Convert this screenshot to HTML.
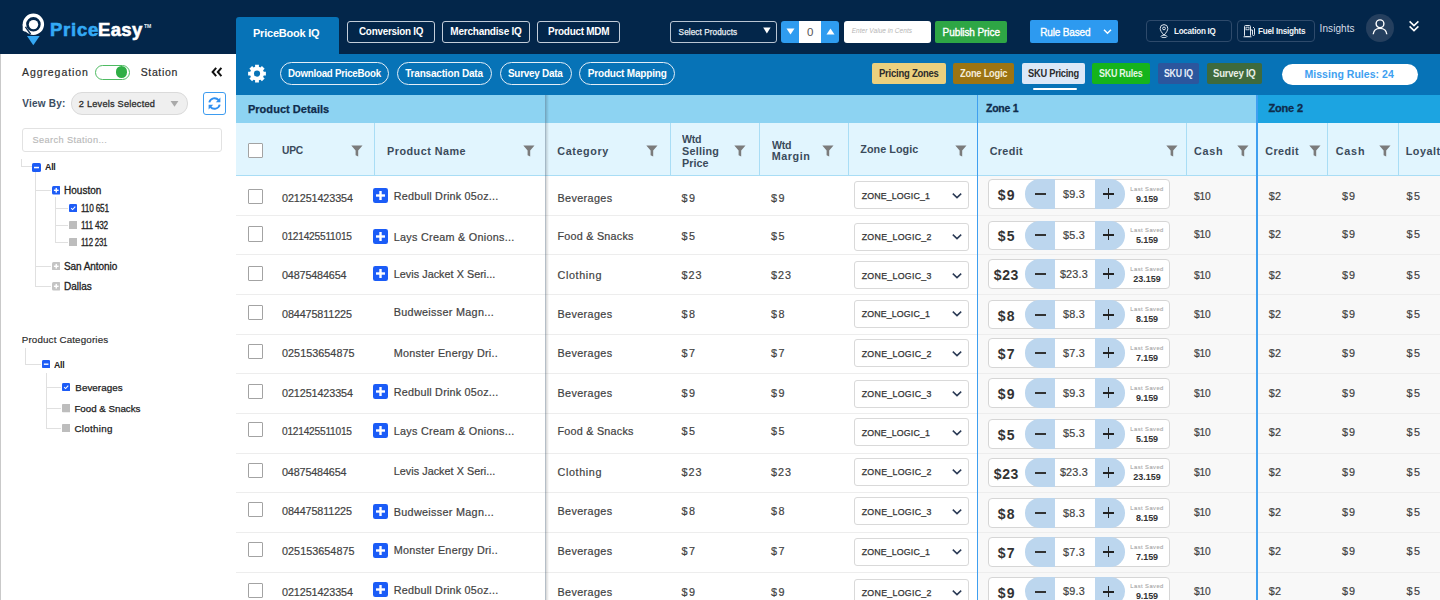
<!DOCTYPE html>
<html><head><meta charset="utf-8"><title>PriceEasy</title>
<style>
html,body{margin:0;padding:0;}
body{width:1440px;height:600px;overflow:hidden;position:relative;background:#fff;font-family:"Liberation Sans",sans-serif;}
div,span,svg{position:absolute;box-sizing:border-box;}
.t{white-space:pre;display:block;}

</style></head><body>
<div style="left:0px;top:0px;width:1440px;height:54px;background:#03264a;"></div>
<svg style="left:0;top:0" width="60" height="54" viewBox="0 0 60 54">
<circle cx="33.4" cy="24.3" r="9" fill="none" stroke="#fff" stroke-width="3.4"/>
<path d="M22.7 24.3 H26.1 V31.5 L24.4 31.5 L22.7 30.5 Z" fill="#fff"/>
<path d="M25.4 26.8 L30.6 34" stroke="#03264a" stroke-width="1.3"/>
<circle cx="33.5" cy="24.6" r="4.7" fill="#fff"/>
<path d="M27 36 L39.7 36 L33.3 45.2 Z" fill="#35a8f4"/>
</svg>
<span class="t" style="left:50.00px;top:21.05px;font-size:18.5px;line-height:18.5px;color:#33aaf5;font-weight:bold;letter-spacing:0.758px;-webkit-text-stroke:0.6px #33aaf5;">Price</span>
<span class="t" style="left:98.00px;top:21.05px;font-size:18.5px;line-height:18.5px;color:#ffffff;font-weight:bold;letter-spacing:0.361px;-webkit-text-stroke:0.6px #ffffff;">Easy</span>
<span class="t" style="left:144.00px;top:24.25px;font-size:5.5px;line-height:5.5px;color:#e8eef5;font-weight:bold;letter-spacing:-0.250px;transform:scaleX(0.9248);transform-origin:0.00px 0;">TM</span>
<div style="left:236px;top:17px;width:103px;height:37px;background:#0773b7;border-radius:3px 3px 0 0;"></div>
<span class="t" style="left:253.00px;top:28.00px;font-size:11px;line-height:11px;color:#ffffff;font-weight:bold;letter-spacing:-0.229px;">PriceBook IQ</span>
<div style="left:347px;top:21px;width:88px;height:22px;border:1.5px solid #c3cdd9;border-radius:3px;"></div>
<span class="t" style="left:358.50px;top:27.20px;font-size:10px;line-height:10px;color:#ffffff;font-weight:bold;letter-spacing:-0.250px;transform:scaleX(0.9853);transform-origin:0.00px 0;">Conversion IQ</span>
<div style="left:442px;top:21px;width:88px;height:22px;border:1.5px solid #c3cdd9;border-radius:3px;"></div>
<span class="t" style="left:450.30px;top:27.20px;font-size:10px;line-height:10px;color:#ffffff;font-weight:bold;letter-spacing:-0.222px;">Merchandise IQ</span>
<div style="left:537px;top:21px;width:83px;height:22px;border:1.5px solid #c3cdd9;border-radius:3px;"></div>
<span class="t" style="left:547.80px;top:27.20px;font-size:10px;line-height:10px;color:#ffffff;font-weight:bold;letter-spacing:-0.250px;transform:scaleX(0.9934);transform-origin:0.00px 0;">Product MDM</span>
<div style="left:670px;top:20.5px;width:107px;height:22.5px;border:1.5px solid #b9c5d3;border-radius:3px;"></div>
<span class="t" style="left:678.60px;top:28.50px;font-size:8.2px;line-height:8.2px;color:#e9eef4;letter-spacing:0.082px;-webkit-text-stroke:0.25px #e9eef4;">Select Products</span>
<svg style="left:762px;top:26px" width="10" height="9" viewBox="0 0 10 9"><path d="M1.2 1.5 H8.6 L4.9 7.6 Z" fill="#fff"/></svg>
<div style="left:781px;top:21px;width:58px;height:21.5px;background:#2f9cf0;border-radius:3px;"></div>
<div style="left:799.4px;top:21px;width:21.4px;height:21.5px;background:#fff;"></div>
<span class="t" style="left:807.10px;top:27.25px;font-size:11.5px;line-height:11.5px;color:#555;">0</span>
<svg style="left:785px;top:27px" width="11" height="9" viewBox="0 0 11 9"><path d="M1.5 1.6 H9.5 L5.5 7.4 Z" fill="#fff"/></svg>
<svg style="left:824.5px;top:26.5px" width="11" height="9" viewBox="0 0 11 9"><path d="M1.5 7.4 H9.5 L5.5 1.6 Z" fill="#fff"/></svg>
<div style="left:844px;top:21px;width:87px;height:22px;background:#fff;border-radius:3px;"></div>
<span class="t" style="left:851.70px;top:28.25px;font-size:6.5px;line-height:6.5px;color:#b5b5b5;font-style:italic;letter-spacing:0.051px;">Enter Value in Cents</span>
<div style="left:935px;top:21px;width:72px;height:22px;background:#2ea645;border-radius:2px;"></div>
<span class="t" style="left:942.60px;top:27.60px;font-size:10px;line-height:10px;color:#ffffff;letter-spacing:-0.083px;-webkit-text-stroke:0.35px #ffffff;">Publish Price</span>
<div style="left:1030px;top:20px;width:88px;height:23px;background:#2d9af0;border-radius:2px;"></div>
<span class="t" style="left:1040.20px;top:27.50px;font-size:10px;line-height:10px;color:#ffffff;letter-spacing:-0.149px;-webkit-text-stroke:0.35px #ffffff;">Rule Based</span>
<svg style="left:1102px;top:26.5px" width="11" height="9" viewBox="0 0 11 9"><path d="M2 2.8 L5.5 6.2 L9 2.8" fill="none" stroke="#fff" stroke-width="1.5"/></svg>
<div style="left:1146px;top:19.5px;width:86px;height:22.5px;border:1px solid #2e4a6b;border-radius:4px;"></div>
<div style="left:1237px;top:19.5px;width:78px;height:22.5px;border:1px solid #2e4a6b;border-radius:4px;"></div>
<svg style="left:1158px;top:23px" width="12" height="16" viewBox="0 0 12 16">
<path d="M6 12.2 C3.6 9.4 2.2 7.4 2.2 5.4 A3.8 3.8 0 0 1 9.8 5.4 C9.8 7.4 8.4 9.4 6 12.2 Z" fill="none" stroke="#dfe6ee" stroke-width="1"/>
<circle cx="6" cy="5.4" r="1.4" fill="none" stroke="#dfe6ee" stroke-width="1"/>
<ellipse cx="6" cy="13.4" rx="3" ry="1.2" fill="none" stroke="#dfe6ee" stroke-width="0.9"/>
</svg>
<svg style="left:1243px;top:24px" width="13" height="14" viewBox="0 0 13 14">
<rect x="1.5" y="1.5" width="6" height="11" rx="1" fill="none" stroke="#dfe6ee" stroke-width="1"/>
<rect x="3" y="3.2" width="3" height="2.6" fill="none" stroke="#dfe6ee" stroke-width="0.8"/>
<path d="M7.5 6 H9.5 V10.5 A1 1 0 0 0 11.5 10.5 V4.5 L10 3" fill="none" stroke="#dfe6ee" stroke-width="1"/>
<path d="M0.5 12.8 H8.5" stroke="#dfe6ee" stroke-width="1"/>
</svg>
<span class="t" style="left:1173.80px;top:26.85px;font-size:8.5px;line-height:8.5px;color:#f0f4f8;font-weight:bold;letter-spacing:-0.250px;transform:scaleX(0.9454);transform-origin:0.00px 0;">Location IQ</span>
<span class="t" style="left:1257.70px;top:26.85px;font-size:8.5px;line-height:8.5px;color:#f0f4f8;font-weight:bold;letter-spacing:-0.250px;transform:scaleX(0.9639);transform-origin:0.00px 0;">Fuel Insights</span>
<span class="t" style="left:1319.60px;top:24.40px;font-size:10px;line-height:10px;color:#d6dde6;letter-spacing:0.077px;">Insights</span>
<div style="left:1365.7px;top:13.5px;width:28.5px;height:28.5px;background:#253f5e;border-radius:50%;"></div>
<svg style="left:1370px;top:17px" width="20" height="20" viewBox="0 0 20 20">
<circle cx="10" cy="6.8" r="3.9" fill="none" stroke="#fff" stroke-width="1.4"/>
<path d="M3.2 17.3 C3.6 13.3 6.3 11.4 10 11.4 C13.7 11.4 16.4 13.3 16.8 17.3" fill="none" stroke="#fff" stroke-width="1.4"/>
</svg>
<svg style="left:1407px;top:19px" width="14" height="14" viewBox="0 0 14 14">
<path d="M2.6 2.4 L7 6.6 L11.4 2.4 M2.6 7.4 L7 11.6 L11.4 7.4" fill="none" stroke="#fff" stroke-width="1.5"/>
</svg>
<div style="left:236px;top:54px;width:1204px;height:41px;background:#0773b7;"></div>
<svg style="left:246px;top:63px" width="22" height="22" viewBox="0 0 22 22"><path fill-rule="evenodd" fill="#fff" d="M17.75 8.73 L19.89 8.65 L19.89 12.55 L17.75 12.47 L17.09 14.05 L18.66 15.51 L15.91 18.26 L14.45 16.69 L12.87 17.35 L12.95 19.49 L9.05 19.49 L9.13 17.35 L7.55 16.69 L6.09 18.26 L3.34 15.51 L4.91 14.05 L4.25 12.47 L2.11 12.55 L2.11 8.65 L4.25 8.73 L4.91 7.15 L3.34 5.69 L6.09 2.94 L7.55 4.51 L9.13 3.85 L9.05 1.71 L12.95 1.71 L12.87 3.85 L14.45 4.51 L15.91 2.94 L18.66 5.69 L17.09 7.15 Z M11 7.5 A3.1 3.1 0 1 0 11 13.7 A3.1 3.1 0 1 0 11 7.5 Z"/></svg>
<div style="left:280px;top:62px;width:109px;height:23px;border:1px solid #e3eef7;border-radius:12px;"></div>
<span class="t" style="left:287.80px;top:68.80px;font-size:10px;line-height:10px;color:#ffffff;font-weight:bold;letter-spacing:-0.250px;transform:scaleX(0.9719);transform-origin:0.00px 0;">Download PriceBook</span>
<div style="left:397px;top:62px;width:95px;height:23px;border:1px solid #e3eef7;border-radius:12px;"></div>
<span class="t" style="left:405.20px;top:68.80px;font-size:10px;line-height:10px;color:#ffffff;font-weight:bold;letter-spacing:-0.181px;">Transaction Data</span>
<div style="left:499.5px;top:62px;width:72.5px;height:23px;border:1px solid #e3eef7;border-radius:12px;"></div>
<span class="t" style="left:508.00px;top:68.80px;font-size:10px;line-height:10px;color:#ffffff;font-weight:bold;letter-spacing:-0.250px;transform:scaleX(0.9920);transform-origin:0.00px 0;">Survey Data</span>
<div style="left:579px;top:62px;width:96.29999999999995px;height:23px;border:1px solid #e3eef7;border-radius:12px;"></div>
<span class="t" style="left:587.80px;top:68.80px;font-size:10px;line-height:10px;color:#ffffff;font-weight:bold;letter-spacing:-0.189px;">Product Mapping</span>
<div style="left:872px;top:62.5px;width:73.5px;height:21.2px;background:#ebd07e;border-radius:2px;"></div>
<span class="t" style="left:878.70px;top:68.60px;font-size:10px;line-height:10px;color:#2b2b2b;font-weight:bold;letter-spacing:-0.250px;transform:scaleX(0.9487);transform-origin:0.00px 0;">Pricing Zones</span>
<div style="left:953px;top:62.5px;width:61px;height:21.2px;background:#9c7413;border-radius:2px;"></div>
<span class="t" style="left:959.60px;top:68.60px;font-size:10px;line-height:10px;color:#f4ecd8;font-weight:bold;letter-spacing:-0.250px;transform:scaleX(0.9298);transform-origin:0.00px 0;">Zone Logic</span>
<div style="left:1021.5px;top:62.5px;width:63.5px;height:21.2px;background:#dce8f7;border-radius:2px;"></div>
<span class="t" style="left:1027.60px;top:68.60px;font-size:10px;line-height:10px;color:#2b2b2b;font-weight:bold;letter-spacing:-0.250px;transform:scaleX(0.9261);transform-origin:0.00px 0;">SKU Pricing</span>
<div style="left:1092.4px;top:62.5px;width:57.299999999999955px;height:21.2px;background:#15b41c;border-radius:2px;"></div>
<span class="t" style="left:1099.00px;top:68.60px;font-size:10px;line-height:10px;color:#e6f6e6;font-weight:bold;letter-spacing:-0.250px;transform:scaleX(0.8898);transform-origin:0.00px 0;">SKU Rules</span>
<div style="left:1157.6px;top:62.5px;width:41.40000000000009px;height:21.2px;background:#2c569d;border-radius:2px;"></div>
<span class="t" style="left:1163.70px;top:68.60px;font-size:10px;line-height:10px;color:#e8eef8;font-weight:bold;letter-spacing:-0.250px;transform:scaleX(0.8737);transform-origin:0.00px 0;">SKU IQ</span>
<div style="left:1207px;top:62.5px;width:54.700000000000045px;height:21.2px;background:#3e6a3d;border-radius:2px;"></div>
<span class="t" style="left:1213.00px;top:68.60px;font-size:10px;line-height:10px;color:#e8efe6;font-weight:bold;letter-spacing:-0.250px;transform:scaleX(0.9574);transform-origin:0.00px 0;">Survey IQ</span>
<div style="left:1033px;top:87.8px;width:44px;height:2.6px;background:#fff;border-radius:2px;"></div>
<div style="left:1282px;top:64px;width:135.5px;height:21.3px;background:#fff;border-radius:11px;"></div>
<span class="t" style="left:1304.50px;top:69.35px;font-size:10.5px;line-height:10.5px;color:#3ea0f0;font-weight:bold;letter-spacing:0.034px;">Missing Rules: 24</span>
<div style="left:0px;top:54px;width:236px;height:546px;background:#fff;border-left:1px solid #c9c9c9;"></div>
<span class="t" style="left:22.00px;top:66.65px;font-size:10.5px;line-height:10.5px;color:#2e2e2e;letter-spacing:0.921px;-webkit-text-stroke:0.2px #2e2e2e;">Aggregation</span>
<div style="left:95px;top:64.6px;width:35px;height:15.2px;border:1px solid #4fbb62;border-radius:8px;"></div>
<div style="left:115.8px;top:66.4px;width:11.4px;height:11.4px;background:#2fae45;border-radius:50%;"></div>
<span class="t" style="left:140.70px;top:67.05px;font-size:10.5px;line-height:10.5px;color:#2e2e2e;letter-spacing:0.642px;-webkit-text-stroke:0.2px #2e2e2e;">Station</span>
<svg style="left:210px;top:66px" width="14" height="12" viewBox="0 0 14 12">
<path d="M6.2 1.8 L2.6 6 L6.2 10.2 M11.4 1.8 L7.8 6 L11.4 10.2" fill="none" stroke="#111" stroke-width="2"/>
</svg>
<span class="t" style="left:22.30px;top:99.00px;font-size:10px;line-height:10px;color:#3b4d62;font-weight:bold;letter-spacing:0.219px;">View By:</span>
<div style="left:71px;top:92.4px;width:117px;height:22.2px;background:#efefef;border:1px solid #dadada;border-radius:11px;"></div>
<span class="t" style="left:78.80px;top:99.70px;font-size:9.2px;line-height:9.2px;color:#2d2d2d;letter-spacing:0.224px;-webkit-text-stroke:0.3px #2d2d2d;">2 Levels Selected</span>
<svg style="left:169px;top:99px" width="11" height="10" viewBox="0 0 11 10"><path d="M1.6 2 H9.4 L5.5 7.8 Z" fill="#a9a9a9"/></svg>
<div style="left:203px;top:92px;width:22.6px;height:22.6px;border:1px solid #3d9cf0;border-radius:3px;"></div>
<svg style="left:206px;top:95px" width="17" height="17" viewBox="0 0 17 17">
<path d="M3.3 7.4 A5.3 5.3 0 0 1 12.6 5.2" fill="none" stroke="#2f8ff0" stroke-width="1.9"/>
<path d="M14.4 2.6 L14.4 7.3 L9.8 7.3 Z" fill="#2f8ff0"/>
<path d="M13.7 9.6 A5.3 5.3 0 0 1 4.4 11.8" fill="none" stroke="#2f8ff0" stroke-width="1.9"/>
<path d="M2.6 14.4 L2.6 9.7 L7.2 9.7 Z" fill="#2f8ff0"/>
</svg>
<div style="left:22px;top:127.5px;width:200px;height:24.5px;border:1px solid #e2e2e2;border-radius:3px;"></div>
<span class="t" style="left:32.50px;top:136.20px;font-size:9.2px;line-height:9.2px;color:#b9b9b9;letter-spacing:0.402px;-webkit-text-stroke:0.15px #b9b9b9;">Search Station...</span>
<div style="left:21px;top:159px;width:1px;height:8px;background:#e0e0e0;"></div>
<div style="left:21px;top:166px;width:11px;height:1px;background:#e0e0e0;"></div>
<svg style="left:32px;top:162.5px" width="9" height="9" viewBox="0 0 9 9"><rect width="9" height="9" rx="1.6" fill="#1d5cf6"/><rect x="2" y="3.8" width="5" height="1.5" fill="#fff"/></svg>
<span class="t" style="left:45.30px;top:161.95px;font-size:9.5px;line-height:9.5px;color:#222;font-weight:bold;letter-spacing:-0.250px;transform:scaleX(0.9273);transform-origin:0.00px 0;">All</span>
<div style="left:35px;top:172px;width:1px;height:115px;background:#e0e0e0;"></div>
<div style="left:35px;top:190.2px;width:16px;height:1px;background:#e0e0e0;"></div>
<svg style="left:51.7px;top:186.2px" width="8.5" height="8.5" viewBox="0 0 9 9"><rect width="9" height="9" rx="1.6" fill="#1d5cf6"/><rect x="2" y="3.8" width="5" height="1.5" fill="#fff"/><rect x="3.75" y="2" width="1.5" height="5" fill="#fff"/></svg>
<span class="t" style="left:64.00px;top:186.20px;font-size:10px;line-height:10px;color:#222;letter-spacing:0.019px;-webkit-text-stroke:0.3px #222;">Houston</span>
<div style="left:35px;top:265.7px;width:16px;height:1px;background:#e0e0e0;"></div>
<svg style="left:51.7px;top:261.7px" width="8.5" height="8.5" viewBox="0 0 9 9"><rect width="9" height="9" rx="1.6" fill="#c4c4c4"/><rect x="2" y="3.8" width="5" height="1.5" fill="#fff"/><rect x="3.75" y="2" width="1.5" height="5" fill="#fff"/></svg>
<span class="t" style="left:64.00px;top:261.70px;font-size:10px;line-height:10px;color:#222;letter-spacing:-0.063px;-webkit-text-stroke:0.3px #222;">San Antonio</span>
<div style="left:35px;top:286px;width:16px;height:1px;background:#e0e0e0;"></div>
<svg style="left:51.7px;top:282px" width="8.5" height="8.5" viewBox="0 0 9 9"><rect width="9" height="9" rx="1.6" fill="#c4c4c4"/><rect x="2" y="3.8" width="5" height="1.5" fill="#fff"/><rect x="3.75" y="2" width="1.5" height="5" fill="#fff"/></svg>
<span class="t" style="left:64.00px;top:282.00px;font-size:10px;line-height:10px;color:#222;letter-spacing:-0.018px;-webkit-text-stroke:0.3px #222;">Dallas</span>
<div style="left:55px;top:197px;width:1px;height:45px;background:#e0e0e0;"></div>
<div style="left:55px;top:208px;width:13px;height:1px;background:#e0e0e0;"></div>
<svg style="left:69px;top:204px" width="8.3" height="8.3" viewBox="0 0 9 9"><rect width="9" height="9" rx="1.6" fill="#1d5cf6"/><path d="M2.3 4.6 L3.9 6.1 L6.8 2.9" fill="none" stroke="#fff" stroke-width="1.1"/></svg>
<span class="t" style="left:81.30px;top:204.00px;font-size:10px;line-height:10px;color:#222;letter-spacing:-0.250px;transform:scaleX(0.8269);transform-origin:0.00px 0;-webkit-text-stroke:0.3px #222;">110 651</span>
<div style="left:55px;top:224.5px;width:13px;height:1px;background:#e0e0e0;"></div>
<svg style="left:69px;top:220.5px" width="8.3" height="8.3" viewBox="0 0 9 9"><rect width="9" height="9" rx="0.8" fill="#bdbdbd"/></svg>
<span class="t" style="left:81.30px;top:220.50px;font-size:10px;line-height:10px;color:#222;letter-spacing:-0.250px;transform:scaleX(0.8184);transform-origin:0.00px 0;-webkit-text-stroke:0.3px #222;">111 432</span>
<div style="left:55px;top:241.6px;width:13px;height:1px;background:#e0e0e0;"></div>
<svg style="left:69px;top:237.6px" width="8.3" height="8.3" viewBox="0 0 9 9"><rect width="9" height="9" rx="0.8" fill="#bdbdbd"/></svg>
<span class="t" style="left:81.30px;top:237.60px;font-size:10px;line-height:10px;color:#222;letter-spacing:-0.250px;transform:scaleX(0.7774);transform-origin:0.00px 0;-webkit-text-stroke:0.3px #222;">112 231</span>
<span class="t" style="left:21.70px;top:335.40px;font-size:9.8px;line-height:9.8px;color:#2a2a2a;letter-spacing:0.155px;-webkit-text-stroke:0.15px #2a2a2a;">Product Categories</span>
<div style="left:25px;top:348px;width:1px;height:16px;background:#e0e0e0;"></div>
<div style="left:25px;top:363.5px;width:16px;height:1px;background:#e0e0e0;"></div>
<svg style="left:41.8px;top:359.5px" width="8.3" height="8.3" viewBox="0 0 9 9"><rect width="9" height="9" rx="1.6" fill="#1d5cf6"/><rect x="2" y="3.8" width="5" height="1.5" fill="#fff"/></svg>
<span class="t" style="left:54.30px;top:359.55px;font-size:9.5px;line-height:9.5px;color:#222;font-weight:bold;letter-spacing:-0.250px;transform:scaleX(0.9182);transform-origin:0.00px 0;">All</span>
<div style="left:45.5px;top:373px;width:1px;height:55.5px;background:#e0e0e0;"></div>
<div style="left:45.5px;top:387.2px;width:15.5px;height:1px;background:#e0e0e0;"></div>
<svg style="left:61.5px;top:383.2px" width="8.3" height="8.3" viewBox="0 0 9 9"><rect width="9" height="9" rx="1.6" fill="#1d5cf6"/><path d="M2.3 4.6 L3.9 6.1 L6.8 2.9" fill="none" stroke="#fff" stroke-width="1.1"/></svg>
<span class="t" style="left:75.30px;top:383.30px;font-size:9.8px;line-height:9.8px;color:#222;letter-spacing:0.058px;-webkit-text-stroke:0.25px #222;">Beverages</span>
<div style="left:45.5px;top:408.3px;width:15.5px;height:1px;background:#e0e0e0;"></div>
<svg style="left:61.5px;top:404.3px" width="8.3" height="8.3" viewBox="0 0 9 9"><rect width="9" height="9" rx="0.8" fill="#bdbdbd"/></svg>
<span class="t" style="left:74.40px;top:404.40px;font-size:9.8px;line-height:9.8px;color:#222;letter-spacing:-0.028px;-webkit-text-stroke:0.25px #222;">Food &amp; Snacks</span>
<div style="left:45.5px;top:428px;width:15.5px;height:1px;background:#e0e0e0;"></div>
<svg style="left:61.5px;top:424px" width="8.3" height="8.3" viewBox="0 0 9 9"><rect width="9" height="9" rx="0.8" fill="#bdbdbd"/></svg>
<span class="t" style="left:74.40px;top:424.10px;font-size:9.8px;line-height:9.8px;color:#222;letter-spacing:0.315px;-webkit-text-stroke:0.25px #222;">Clothing</span>
<div style="left:236px;top:95px;width:1204px;height:28px;background:#8dd3f2;"></div>
<div style="left:1257px;top:95px;width:183px;height:28px;background:#1ca4e1;"></div>
<div style="left:236px;top:123px;width:1204px;height:53px;background:#e1f5fe;border-bottom:1px solid #a9ddf5;"></div>
<div style="left:374px;top:123px;width:1px;height:52px;background:#a9ddf5;"></div>
<div style="left:670px;top:123px;width:1px;height:52px;background:#a9ddf5;"></div>
<div style="left:759px;top:123px;width:1px;height:52px;background:#a9ddf5;"></div>
<div style="left:848px;top:123px;width:1px;height:52px;background:#a9ddf5;"></div>
<div style="left:1185.5px;top:123px;width:1px;height:52px;background:#a9ddf5;"></div>
<div style="left:1327px;top:123px;width:1px;height:52px;background:#a9ddf5;"></div>
<div style="left:1398px;top:123px;width:1px;height:52px;background:#a9ddf5;"></div>
<div style="left:236px;top:176px;width:741px;height:424px;background:#fff;"></div>
<div style="left:978px;top:176px;width:462px;height:424px;background:#f8f8f8;"></div>
<span class="t" style="left:247.90px;top:104.30px;font-size:11px;line-height:11px;color:#0f2c4c;font-weight:bold;letter-spacing:0.045px;-webkit-text-stroke:0.25px #0f2c4c;">Product Details</span>
<span class="t" style="left:986.30px;top:103.00px;font-size:11px;line-height:11px;color:#0f2c4c;font-weight:bold;letter-spacing:-0.250px;transform:scaleX(0.9507);transform-origin:0.00px 0;-webkit-text-stroke:0.3px #0f2c4c;">Zone 1</span>
<span class="t" style="left:1268.40px;top:103.10px;font-size:11px;line-height:11px;color:#0f2c4c;font-weight:bold;letter-spacing:-0.146px;-webkit-text-stroke:0.3px #0f2c4c;">Zone 2</span>
<div style="left:247.5px;top:142.5px;width:15.2px;height:15.2px;background:#fff;border:1.5px solid #a3a3a3;border-radius:1px;"></div>
<span class="t" style="left:282.30px;top:145.10px;font-size:10.8px;line-height:10.8px;color:#3b4b5b;font-weight:bold;letter-spacing:-0.250px;transform:scaleX(0.9512);transform-origin:0.00px 0;">UPC</span>
<svg style="left:351.3px;top:145px" width="12" height="12" viewBox="0 0 12 12"><path d="M0.3 0.6 H11.5 L7.2 5.6 V11.6 L4.6 10.2 V5.6 Z" fill="#7b7b7b"/></svg>
<span class="t" style="left:387.10px;top:145.90px;font-size:10.8px;line-height:10.8px;color:#3b4b5b;font-weight:bold;letter-spacing:0.483px;">Product Name</span>
<svg style="left:522.8px;top:145px" width="12" height="12" viewBox="0 0 12 12"><path d="M0.3 0.6 H11.5 L7.2 5.6 V11.6 L4.6 10.2 V5.6 Z" fill="#7b7b7b"/></svg>
<span class="t" style="left:557.30px;top:145.90px;font-size:10.8px;line-height:10.8px;color:#3b4b5b;font-weight:bold;letter-spacing:0.601px;">Category</span>
<svg style="left:645.9px;top:145px" width="12" height="12" viewBox="0 0 12 12"><path d="M0.3 0.6 H11.5 L7.2 5.6 V11.6 L4.6 10.2 V5.6 Z" fill="#7b7b7b"/></svg>
<span class="t" style="left:682.00px;top:133.70px;font-size:10.8px;line-height:10.8px;color:#3b4b5b;font-weight:bold;letter-spacing:-0.250px;transform:scaleX(0.9852);transform-origin:0.00px 0;">Wtd</span>
<span class="t" style="left:682.00px;top:145.60px;font-size:10.8px;line-height:10.8px;color:#3b4b5b;font-weight:bold;letter-spacing:0.250px;">Selling</span>
<span class="t" style="left:682.00px;top:157.50px;font-size:10.8px;line-height:10.8px;color:#3b4b5b;font-weight:bold;letter-spacing:0.023px;">Price</span>
<svg style="left:733.5px;top:145px" width="12" height="12" viewBox="0 0 12 12"><path d="M0.3 0.6 H11.5 L7.2 5.6 V11.6 L4.6 10.2 V5.6 Z" fill="#7b7b7b"/></svg>
<span class="t" style="left:771.70px;top:139.50px;font-size:10.8px;line-height:10.8px;color:#3b4b5b;font-weight:bold;letter-spacing:-0.250px;transform:scaleX(0.9852);transform-origin:0.00px 0;">Wtd</span>
<span class="t" style="left:771.70px;top:151.10px;font-size:10.8px;line-height:10.8px;color:#3b4b5b;font-weight:bold;letter-spacing:0.541px;">Margin</span>
<svg style="left:822.3px;top:145px" width="12" height="12" viewBox="0 0 12 12"><path d="M0.3 0.6 H11.5 L7.2 5.6 V11.6 L4.6 10.2 V5.6 Z" fill="#7b7b7b"/></svg>
<span class="t" style="left:860.30px;top:144.10px;font-size:10.8px;line-height:10.8px;color:#3b4b5b;font-weight:bold;letter-spacing:0.047px;">Zone Logic</span>
<svg style="left:955.1px;top:145px" width="12" height="12" viewBox="0 0 12 12"><path d="M0.3 0.6 H11.5 L7.2 5.6 V11.6 L4.6 10.2 V5.6 Z" fill="#7b7b7b"/></svg>
<span class="t" style="left:989.70px;top:145.70px;font-size:10.8px;line-height:10.8px;color:#3b4b5b;font-weight:bold;letter-spacing:0.340px;">Credit</span>
<svg style="left:1165.9px;top:145px" width="12" height="12" viewBox="0 0 12 12"><path d="M0.3 0.6 H11.5 L7.2 5.6 V11.6 L4.6 10.2 V5.6 Z" fill="#7b7b7b"/></svg>
<span class="t" style="left:1193.90px;top:145.70px;font-size:10.8px;line-height:10.8px;color:#3b4b5b;font-weight:bold;letter-spacing:0.798px;">Cash</span>
<svg style="left:1237.3px;top:145px" width="12" height="12" viewBox="0 0 12 12"><path d="M0.3 0.6 H11.5 L7.2 5.6 V11.6 L4.6 10.2 V5.6 Z" fill="#7b7b7b"/></svg>
<span class="t" style="left:1265.20px;top:145.70px;font-size:10.8px;line-height:10.8px;color:#3b4b5b;font-weight:bold;letter-spacing:0.440px;">Credit</span>
<svg style="left:1308.6px;top:145px" width="12" height="12" viewBox="0 0 12 12"><path d="M0.3 0.6 H11.5 L7.2 5.6 V11.6 L4.6 10.2 V5.6 Z" fill="#7b7b7b"/></svg>
<span class="t" style="left:1335.70px;top:145.70px;font-size:10.8px;line-height:10.8px;color:#3b4b5b;font-weight:bold;letter-spacing:0.798px;">Cash</span>
<svg style="left:1378.9px;top:145px" width="12" height="12" viewBox="0 0 12 12"><path d="M0.3 0.6 H11.5 L7.2 5.6 V11.6 L4.6 10.2 V5.6 Z" fill="#7b7b7b"/></svg>
<span class="t" style="left:1405.70px;top:145.70px;font-size:10.8px;line-height:10.8px;color:#3b4b5b;font-weight:bold;letter-spacing:0.501px;">Loyalty</span>
<div style="left:236px;top:214.65px;width:1204px;height:1px;background:#ededed;"></div>
<div style="left:247.5px;top:188.8px;width:15.2px;height:15.2px;background:#fff;border:1.5px solid #a3a3a3;border-radius:1px;"></div>
<span class="t" style="left:282.00px;top:193.00px;font-size:10.8px;line-height:10.8px;color:#424242;letter-spacing:-0.096px;-webkit-text-stroke:0.2px #424242;">021251423354</span>
<svg style="left:373.3px;top:188.20px" width="15" height="15" viewBox="0 0 15 15"><rect width="15" height="15" rx="2.2" fill="#1b5cf7"/><rect x="3" y="6.3" width="9" height="2.4" fill="#fff"/><rect x="6.3" y="3" width="2.4" height="9" fill="#fff"/></svg>
<span class="t" style="left:393.80px;top:190.90px;font-size:10.8px;line-height:10.8px;color:#424242;letter-spacing:0.214px;-webkit-text-stroke:0.2px #424242;">Redbull Drink 05oz...</span>
<span class="t" style="left:557.50px;top:193.00px;font-size:10.8px;line-height:10.8px;color:#424242;letter-spacing:0.373px;-webkit-text-stroke:0.2px #424242;">Beverages</span>
<span class="t" style="left:681.50px;top:193.00px;font-size:10.8px;line-height:10.8px;color:#424242;letter-spacing:1.495px;-webkit-text-stroke:0.2px #424242;">$9</span>
<span class="t" style="left:771.00px;top:193.00px;font-size:10.8px;line-height:10.8px;color:#424242;letter-spacing:1.495px;-webkit-text-stroke:0.2px #424242;">$9</span>
<div style="left:853.5px;top:181.4px;width:115.2px;height:28px;background:#fff;border:1px solid #d9d9d9;border-radius:3px;"></div>
<span class="t" style="left:861.70px;top:192.10px;font-size:8.8px;line-height:8.8px;color:#333;letter-spacing:0.155px;-webkit-text-stroke:0.25px #333;">ZONE_LOGIC_1</span>
<svg style="left:950.5px;top:190.70px" width="12" height="9" viewBox="0 0 12 9"><path d="M1.8 2.6 L6 6.6 L10.2 2.6" fill="none" stroke="#2b3a55" stroke-width="1.5"/></svg>
<div style="left:988px;top:179.4px;width:182.4px;height:29.5px;background:#fff;border:1px solid #d6d6d6;border-radius:4px;"></div>
<div style="left:1025.3px;top:179.40px;width:29.6px;height:29.5px;background:#bcd6ee;border-radius:14.75px 0 0 14.75px;"></div>
<div style="left:1094.9px;top:179.40px;width:30px;height:29.5px;background:#bcd6ee;border-radius:0 14.75px 14.75px 0;"></div>
<div style="left:1034.8px;top:193px;width:11.7px;height:1.5px;background:#333;"></div>
<div style="left:1103px;top:193px;width:10.8px;height:1.5px;background:#222;"></div>
<div style="left:1107.6px;top:188.4px;width:1.5px;height:10.8px;background:#222;"></div>
<span class="t" style="left:997.65px;top:188.30px;font-size:14px;line-height:14px;color:#333;font-weight:bold;letter-spacing:1.314px;">$9</span>
<span class="t" style="left:1062.90px;top:188.80px;font-size:10.8px;line-height:10.8px;color:#444;letter-spacing:0.264px;-webkit-text-stroke:0.2px #444;">$9.3</span>
<span class="t" style="left:1130.30px;top:187.00px;font-size:5.8px;line-height:5.8px;color:#a6a6a6;letter-spacing:0.447px;-webkit-text-stroke:0.1px #a6a6a6;">Last Saved</span>
<span class="t" style="left:1135.95px;top:195.00px;font-size:9px;line-height:9px;color:#333;font-weight:bold;letter-spacing:-0.104px;">9.159</span>
<span class="t" style="left:1194.40px;top:191.40px;font-size:10.8px;line-height:10.8px;color:#424242;letter-spacing:-0.250px;transform:scaleX(0.9481);transform-origin:0.00px 0;-webkit-text-stroke:0.2px #424242;">$10</span>
<span class="t" style="left:1268.80px;top:191.40px;font-size:10.8px;line-height:10.8px;color:#424242;letter-spacing:0.195px;-webkit-text-stroke:0.2px #424242;">$2</span>
<span class="t" style="left:1342.10px;top:191.40px;font-size:10.8px;line-height:10.8px;color:#424242;letter-spacing:0.995px;-webkit-text-stroke:0.2px #424242;">$9</span>
<span class="t" style="left:1406.50px;top:191.40px;font-size:10.8px;line-height:10.8px;color:#424242;letter-spacing:1.495px;-webkit-text-stroke:0.2px #424242;">$5</span>
<div style="left:236px;top:254.3px;width:1204px;height:1px;background:#ededed;"></div>
<div style="left:247.5px;top:226.35000000000002px;width:15.2px;height:15.2px;background:#fff;border:1.5px solid #a3a3a3;border-radius:1px;"></div>
<span class="t" style="left:282.00px;top:230.55px;font-size:10.8px;line-height:10.8px;color:#424242;letter-spacing:-0.250px;transform:scaleX(0.9427);transform-origin:0.00px 0;-webkit-text-stroke:0.2px #424242;">0121425511015</span>
<svg style="left:373.3px;top:229.15px" width="15" height="15" viewBox="0 0 15 15"><rect width="15" height="15" rx="2.2" fill="#1b5cf7"/><rect x="3" y="6.3" width="9" height="2.4" fill="#fff"/><rect x="6.3" y="3" width="2.4" height="9" fill="#fff"/></svg>
<span class="t" style="left:393.80px;top:231.85px;font-size:10.8px;line-height:10.8px;color:#424242;letter-spacing:0.280px;-webkit-text-stroke:0.2px #424242;">Lays Cream &amp; Onions...</span>
<span class="t" style="left:557.50px;top:230.55px;font-size:10.8px;line-height:10.8px;color:#424242;letter-spacing:0.232px;-webkit-text-stroke:0.2px #424242;">Food &amp; Snacks</span>
<span class="t" style="left:681.50px;top:230.55px;font-size:10.8px;line-height:10.8px;color:#424242;letter-spacing:1.495px;-webkit-text-stroke:0.2px #424242;">$5</span>
<span class="t" style="left:771.00px;top:230.55px;font-size:10.8px;line-height:10.8px;color:#424242;letter-spacing:1.495px;-webkit-text-stroke:0.2px #424242;">$5</span>
<div style="left:853.5px;top:222.5px;width:115.2px;height:28px;background:#fff;border:1px solid #d9d9d9;border-radius:3px;"></div>
<span class="t" style="left:861.70px;top:233.20px;font-size:8.8px;line-height:8.8px;color:#333;letter-spacing:0.291px;-webkit-text-stroke:0.25px #333;">ZONE_LOGIC_2</span>
<svg style="left:950.5px;top:231.80px" width="12" height="9" viewBox="0 0 12 9"><path d="M1.8 2.6 L6 6.6 L10.2 2.6" fill="none" stroke="#2b3a55" stroke-width="1.5"/></svg>
<div style="left:988px;top:220.5px;width:182.4px;height:29.5px;background:#fff;border:1px solid #d6d6d6;border-radius:4px;"></div>
<div style="left:1025.3px;top:220.50px;width:29.6px;height:29.5px;background:#bcd6ee;border-radius:14.75px 0 0 14.75px;"></div>
<div style="left:1094.9px;top:220.50px;width:30px;height:29.5px;background:#bcd6ee;border-radius:0 14.75px 14.75px 0;"></div>
<div style="left:1034.8px;top:234px;width:11.7px;height:1.5px;background:#333;"></div>
<div style="left:1103px;top:234px;width:10.8px;height:1.5px;background:#222;"></div>
<div style="left:1107.6px;top:229.4px;width:1.5px;height:10.8px;background:#222;"></div>
<span class="t" style="left:997.65px;top:229.40px;font-size:14px;line-height:14px;color:#333;font-weight:bold;letter-spacing:1.314px;">$5</span>
<span class="t" style="left:1062.90px;top:229.90px;font-size:10.8px;line-height:10.8px;color:#444;letter-spacing:0.264px;-webkit-text-stroke:0.2px #444;">$5.3</span>
<span class="t" style="left:1130.30px;top:228.10px;font-size:5.8px;line-height:5.8px;color:#a6a6a6;letter-spacing:0.447px;-webkit-text-stroke:0.1px #a6a6a6;">Last Saved</span>
<span class="t" style="left:1135.95px;top:236.10px;font-size:9px;line-height:9px;color:#333;font-weight:bold;letter-spacing:-0.104px;">5.159</span>
<span class="t" style="left:1194.40px;top:229.35px;font-size:10.8px;line-height:10.8px;color:#424242;letter-spacing:-0.250px;transform:scaleX(0.9481);transform-origin:0.00px 0;-webkit-text-stroke:0.2px #424242;">$10</span>
<span class="t" style="left:1268.80px;top:229.35px;font-size:10.8px;line-height:10.8px;color:#424242;letter-spacing:0.195px;-webkit-text-stroke:0.2px #424242;">$2</span>
<span class="t" style="left:1342.10px;top:229.35px;font-size:10.8px;line-height:10.8px;color:#424242;letter-spacing:0.995px;-webkit-text-stroke:0.2px #424242;">$9</span>
<span class="t" style="left:1406.50px;top:229.35px;font-size:10.8px;line-height:10.8px;color:#424242;letter-spacing:1.495px;-webkit-text-stroke:0.2px #424242;">$5</span>
<div style="left:236px;top:293.95px;width:1204px;height:1px;background:#ededed;"></div>
<div style="left:247.5px;top:266.09999999999997px;width:15.2px;height:15.2px;background:#fff;border:1.5px solid #a3a3a3;border-radius:1px;"></div>
<span class="t" style="left:282.00px;top:270.30px;font-size:10.8px;line-height:10.8px;color:#424242;letter-spacing:-0.155px;-webkit-text-stroke:0.2px #424242;">04875484654</span>
<svg style="left:373.3px;top:266.20px" width="15" height="15" viewBox="0 0 15 15"><rect width="15" height="15" rx="2.2" fill="#1b5cf7"/><rect x="3" y="6.3" width="9" height="2.4" fill="#fff"/><rect x="6.3" y="3" width="2.4" height="9" fill="#fff"/></svg>
<span class="t" style="left:393.80px;top:268.90px;font-size:10.8px;line-height:10.8px;color:#424242;letter-spacing:0.033px;-webkit-text-stroke:0.2px #424242;">Levis Jacket X Seri...</span>
<span class="t" style="left:557.50px;top:270.30px;font-size:10.8px;line-height:10.8px;color:#424242;letter-spacing:0.627px;-webkit-text-stroke:0.2px #424242;">Clothing</span>
<span class="t" style="left:681.50px;top:270.30px;font-size:10.8px;line-height:10.8px;color:#424242;letter-spacing:0.995px;-webkit-text-stroke:0.2px #424242;">$23</span>
<span class="t" style="left:771.00px;top:270.30px;font-size:10.8px;line-height:10.8px;color:#424242;letter-spacing:0.995px;-webkit-text-stroke:0.2px #424242;">$23</span>
<div style="left:853.5px;top:261.3px;width:115.2px;height:28px;background:#fff;border:1px solid #d9d9d9;border-radius:3px;"></div>
<span class="t" style="left:861.70px;top:272.00px;font-size:8.8px;line-height:8.8px;color:#333;letter-spacing:0.291px;-webkit-text-stroke:0.25px #333;">ZONE_LOGIC_3</span>
<svg style="left:950.5px;top:270.60px" width="12" height="9" viewBox="0 0 12 9"><path d="M1.8 2.6 L6 6.6 L10.2 2.6" fill="none" stroke="#2b3a55" stroke-width="1.5"/></svg>
<div style="left:988px;top:259.1px;width:182.4px;height:29.5px;background:#fff;border:1px solid #d6d6d6;border-radius:4px;"></div>
<div style="left:1025.3px;top:259.10px;width:29.6px;height:29.5px;background:#bcd6ee;border-radius:14.75px 0 0 14.75px;"></div>
<div style="left:1094.9px;top:259.10px;width:30px;height:29.5px;background:#bcd6ee;border-radius:0 14.75px 14.75px 0;"></div>
<div style="left:1034.8px;top:273px;width:11.7px;height:1.5px;background:#333;"></div>
<div style="left:1103px;top:273px;width:10.8px;height:1.5px;background:#222;"></div>
<div style="left:1107.6px;top:268.4px;width:1.5px;height:10.8px;background:#222;"></div>
<span class="t" style="left:993.85px;top:268.00px;font-size:14px;line-height:14px;color:#333;font-weight:bold;letter-spacing:0.564px;">$23</span>
<span class="t" style="left:1059.95px;top:268.50px;font-size:10.8px;line-height:10.8px;color:#444;letter-spacing:0.172px;-webkit-text-stroke:0.2px #444;">$23.3</span>
<span class="t" style="left:1130.30px;top:266.70px;font-size:5.8px;line-height:5.8px;color:#a6a6a6;letter-spacing:0.447px;-webkit-text-stroke:0.1px #a6a6a6;">Last Saved</span>
<span class="t" style="left:1133.15px;top:274.70px;font-size:9px;line-height:9px;color:#333;font-weight:bold;letter-spacing:0.036px;">23.159</span>
<span class="t" style="left:1194.40px;top:270.10px;font-size:10.8px;line-height:10.8px;color:#424242;letter-spacing:-0.250px;transform:scaleX(0.9481);transform-origin:0.00px 0;-webkit-text-stroke:0.2px #424242;">$10</span>
<span class="t" style="left:1268.80px;top:270.10px;font-size:10.8px;line-height:10.8px;color:#424242;letter-spacing:0.195px;-webkit-text-stroke:0.2px #424242;">$2</span>
<span class="t" style="left:1342.10px;top:270.10px;font-size:10.8px;line-height:10.8px;color:#424242;letter-spacing:0.995px;-webkit-text-stroke:0.2px #424242;">$9</span>
<span class="t" style="left:1406.50px;top:270.10px;font-size:10.8px;line-height:10.8px;color:#424242;letter-spacing:1.495px;-webkit-text-stroke:0.2px #424242;">$5</span>
<div style="left:236px;top:333.59999999999997px;width:1204px;height:1px;background:#ededed;"></div>
<div style="left:247.5px;top:305.15px;width:15.2px;height:15.2px;background:#fff;border:1.5px solid #a3a3a3;border-radius:1px;"></div>
<span class="t" style="left:282.00px;top:309.35px;font-size:10.8px;line-height:10.8px;color:#424242;letter-spacing:-0.114px;-webkit-text-stroke:0.2px #424242;">084475811225</span>
<span class="t" style="left:393.80px;top:306.75px;font-size:10.8px;line-height:10.8px;color:#424242;letter-spacing:0.305px;-webkit-text-stroke:0.2px #424242;">Budweisser Magn...</span>
<span class="t" style="left:557.50px;top:309.35px;font-size:10.8px;line-height:10.8px;color:#424242;letter-spacing:0.373px;-webkit-text-stroke:0.2px #424242;">Beverages</span>
<span class="t" style="left:681.50px;top:309.35px;font-size:10.8px;line-height:10.8px;color:#424242;letter-spacing:1.495px;-webkit-text-stroke:0.2px #424242;">$8</span>
<span class="t" style="left:771.00px;top:309.35px;font-size:10.8px;line-height:10.8px;color:#424242;letter-spacing:1.495px;-webkit-text-stroke:0.2px #424242;">$8</span>
<div style="left:853.5px;top:299.59999999999997px;width:115.2px;height:28px;background:#fff;border:1px solid #d9d9d9;border-radius:3px;"></div>
<span class="t" style="left:861.70px;top:310.30px;font-size:8.8px;line-height:8.8px;color:#333;letter-spacing:0.155px;-webkit-text-stroke:0.25px #333;">ZONE_LOGIC_1</span>
<svg style="left:950.5px;top:308.90px" width="12" height="9" viewBox="0 0 12 9"><path d="M1.8 2.6 L6 6.6 L10.2 2.6" fill="none" stroke="#2b3a55" stroke-width="1.5"/></svg>
<div style="left:988px;top:299.59999999999997px;width:182.4px;height:29.5px;background:#fff;border:1px solid #d6d6d6;border-radius:4px;"></div>
<div style="left:1025.3px;top:299.60px;width:29.6px;height:29.5px;background:#bcd6ee;border-radius:14.75px 0 0 14.75px;"></div>
<div style="left:1094.9px;top:299.60px;width:30px;height:29.5px;background:#bcd6ee;border-radius:0 14.75px 14.75px 0;"></div>
<div style="left:1034.8px;top:314px;width:11.7px;height:1.5px;background:#333;"></div>
<div style="left:1103px;top:314px;width:10.8px;height:1.5px;background:#222;"></div>
<div style="left:1107.6px;top:309.4px;width:1.5px;height:10.8px;background:#222;"></div>
<span class="t" style="left:997.65px;top:308.50px;font-size:14px;line-height:14px;color:#333;font-weight:bold;letter-spacing:1.314px;">$8</span>
<span class="t" style="left:1062.90px;top:309.00px;font-size:10.8px;line-height:10.8px;color:#444;letter-spacing:0.264px;-webkit-text-stroke:0.2px #444;">$8.3</span>
<span class="t" style="left:1130.30px;top:307.20px;font-size:5.8px;line-height:5.8px;color:#a6a6a6;letter-spacing:0.447px;-webkit-text-stroke:0.1px #a6a6a6;">Last Saved</span>
<span class="t" style="left:1135.95px;top:315.20px;font-size:9px;line-height:9px;color:#333;font-weight:bold;letter-spacing:-0.104px;">8.159</span>
<span class="t" style="left:1194.40px;top:309.15px;font-size:10.8px;line-height:10.8px;color:#424242;letter-spacing:-0.250px;transform:scaleX(0.9481);transform-origin:0.00px 0;-webkit-text-stroke:0.2px #424242;">$10</span>
<span class="t" style="left:1268.80px;top:309.15px;font-size:10.8px;line-height:10.8px;color:#424242;letter-spacing:0.195px;-webkit-text-stroke:0.2px #424242;">$2</span>
<span class="t" style="left:1342.10px;top:309.15px;font-size:10.8px;line-height:10.8px;color:#424242;letter-spacing:0.995px;-webkit-text-stroke:0.2px #424242;">$9</span>
<span class="t" style="left:1406.50px;top:309.15px;font-size:10.8px;line-height:10.8px;color:#424242;letter-spacing:1.495px;-webkit-text-stroke:0.2px #424242;">$5</span>
<div style="left:236px;top:373.25px;width:1204px;height:1px;background:#ededed;"></div>
<div style="left:247.5px;top:344.1px;width:15.2px;height:15.2px;background:#fff;border:1.5px solid #a3a3a3;border-radius:1px;"></div>
<span class="t" style="left:282.00px;top:348.30px;font-size:10.8px;line-height:10.8px;color:#424242;letter-spacing:0.041px;-webkit-text-stroke:0.2px #424242;">025153654875</span>
<span class="t" style="left:393.80px;top:347.60px;font-size:10.8px;line-height:10.8px;color:#424242;letter-spacing:0.263px;-webkit-text-stroke:0.2px #424242;">Monster Energy Dri..</span>
<span class="t" style="left:557.50px;top:348.30px;font-size:10.8px;line-height:10.8px;color:#424242;letter-spacing:0.373px;-webkit-text-stroke:0.2px #424242;">Beverages</span>
<span class="t" style="left:681.50px;top:348.30px;font-size:10.8px;line-height:10.8px;color:#424242;letter-spacing:1.495px;-webkit-text-stroke:0.2px #424242;">$7</span>
<span class="t" style="left:771.00px;top:348.30px;font-size:10.8px;line-height:10.8px;color:#424242;letter-spacing:1.495px;-webkit-text-stroke:0.2px #424242;">$7</span>
<div style="left:853.5px;top:339.20000000000005px;width:115.2px;height:28px;background:#fff;border:1px solid #d9d9d9;border-radius:3px;"></div>
<span class="t" style="left:861.70px;top:349.90px;font-size:8.8px;line-height:8.8px;color:#333;letter-spacing:0.291px;-webkit-text-stroke:0.25px #333;">ZONE_LOGIC_2</span>
<svg style="left:950.5px;top:348.50px" width="12" height="9" viewBox="0 0 12 9"><path d="M1.8 2.6 L6 6.6 L10.2 2.6" fill="none" stroke="#2b3a55" stroke-width="1.5"/></svg>
<div style="left:988px;top:338.40000000000003px;width:182.4px;height:29.5px;background:#fff;border:1px solid #d6d6d6;border-radius:4px;"></div>
<div style="left:1025.3px;top:338.40px;width:29.6px;height:29.5px;background:#bcd6ee;border-radius:14.75px 0 0 14.75px;"></div>
<div style="left:1094.9px;top:338.40px;width:30px;height:29.5px;background:#bcd6ee;border-radius:0 14.75px 14.75px 0;"></div>
<div style="left:1034.8px;top:352px;width:11.7px;height:1.5px;background:#333;"></div>
<div style="left:1103px;top:352px;width:10.8px;height:1.5px;background:#222;"></div>
<div style="left:1107.6px;top:347.4px;width:1.5px;height:10.8px;background:#222;"></div>
<span class="t" style="left:997.65px;top:347.30px;font-size:14px;line-height:14px;color:#333;font-weight:bold;letter-spacing:1.314px;">$7</span>
<span class="t" style="left:1062.90px;top:347.80px;font-size:10.8px;line-height:10.8px;color:#444;letter-spacing:0.264px;-webkit-text-stroke:0.2px #444;">$7.3</span>
<span class="t" style="left:1130.30px;top:346.00px;font-size:5.8px;line-height:5.8px;color:#a6a6a6;letter-spacing:0.447px;-webkit-text-stroke:0.1px #a6a6a6;">Last Saved</span>
<span class="t" style="left:1135.95px;top:354.00px;font-size:9px;line-height:9px;color:#333;font-weight:bold;letter-spacing:-0.104px;">7.159</span>
<span class="t" style="left:1194.40px;top:348.30px;font-size:10.8px;line-height:10.8px;color:#424242;letter-spacing:-0.250px;transform:scaleX(0.9481);transform-origin:0.00px 0;-webkit-text-stroke:0.2px #424242;">$10</span>
<span class="t" style="left:1268.80px;top:348.30px;font-size:10.8px;line-height:10.8px;color:#424242;letter-spacing:0.195px;-webkit-text-stroke:0.2px #424242;">$2</span>
<span class="t" style="left:1342.10px;top:348.30px;font-size:10.8px;line-height:10.8px;color:#424242;letter-spacing:0.995px;-webkit-text-stroke:0.2px #424242;">$9</span>
<span class="t" style="left:1406.50px;top:348.30px;font-size:10.8px;line-height:10.8px;color:#424242;letter-spacing:1.495px;-webkit-text-stroke:0.2px #424242;">$5</span>
<div style="left:236px;top:412.9px;width:1204px;height:1px;background:#ededed;"></div>
<div style="left:247.5px;top:384.15px;width:15.2px;height:15.2px;background:#fff;border:1.5px solid #a3a3a3;border-radius:1px;"></div>
<span class="t" style="left:282.00px;top:388.35px;font-size:10.8px;line-height:10.8px;color:#424242;letter-spacing:-0.096px;-webkit-text-stroke:0.2px #424242;">021251423354</span>
<svg style="left:373.3px;top:383.95px" width="15" height="15" viewBox="0 0 15 15"><rect width="15" height="15" rx="2.2" fill="#1b5cf7"/><rect x="3" y="6.3" width="9" height="2.4" fill="#fff"/><rect x="6.3" y="3" width="2.4" height="9" fill="#fff"/></svg>
<span class="t" style="left:393.80px;top:386.65px;font-size:10.8px;line-height:10.8px;color:#424242;letter-spacing:0.214px;-webkit-text-stroke:0.2px #424242;">Redbull Drink 05oz...</span>
<span class="t" style="left:557.50px;top:388.35px;font-size:10.8px;line-height:10.8px;color:#424242;letter-spacing:0.373px;-webkit-text-stroke:0.2px #424242;">Beverages</span>
<span class="t" style="left:681.50px;top:388.35px;font-size:10.8px;line-height:10.8px;color:#424242;letter-spacing:1.495px;-webkit-text-stroke:0.2px #424242;">$9</span>
<span class="t" style="left:771.00px;top:388.35px;font-size:10.8px;line-height:10.8px;color:#424242;letter-spacing:1.495px;-webkit-text-stroke:0.2px #424242;">$9</span>
<div style="left:853.5px;top:379.7px;width:115.2px;height:28px;background:#fff;border:1px solid #d9d9d9;border-radius:3px;"></div>
<span class="t" style="left:861.70px;top:390.40px;font-size:8.8px;line-height:8.8px;color:#333;letter-spacing:0.291px;-webkit-text-stroke:0.25px #333;">ZONE_LOGIC_3</span>
<svg style="left:950.5px;top:389.00px" width="12" height="9" viewBox="0 0 12 9"><path d="M1.8 2.6 L6 6.6 L10.2 2.6" fill="none" stroke="#2b3a55" stroke-width="1.5"/></svg>
<div style="left:988px;top:378.3px;width:182.4px;height:29.5px;background:#fff;border:1px solid #d6d6d6;border-radius:4px;"></div>
<div style="left:1025.3px;top:378.30px;width:29.6px;height:29.5px;background:#bcd6ee;border-radius:14.75px 0 0 14.75px;"></div>
<div style="left:1094.9px;top:378.30px;width:30px;height:29.5px;background:#bcd6ee;border-radius:0 14.75px 14.75px 0;"></div>
<div style="left:1034.8px;top:392px;width:11.7px;height:1.5px;background:#333;"></div>
<div style="left:1103px;top:392px;width:10.8px;height:1.5px;background:#222;"></div>
<div style="left:1107.6px;top:387.4px;width:1.5px;height:10.8px;background:#222;"></div>
<span class="t" style="left:997.65px;top:387.20px;font-size:14px;line-height:14px;color:#333;font-weight:bold;letter-spacing:1.314px;">$9</span>
<span class="t" style="left:1062.90px;top:387.70px;font-size:10.8px;line-height:10.8px;color:#444;letter-spacing:0.264px;-webkit-text-stroke:0.2px #444;">$9.3</span>
<span class="t" style="left:1130.30px;top:385.90px;font-size:5.8px;line-height:5.8px;color:#a6a6a6;letter-spacing:0.447px;-webkit-text-stroke:0.1px #a6a6a6;">Last Saved</span>
<span class="t" style="left:1135.95px;top:393.90px;font-size:9px;line-height:9px;color:#333;font-weight:bold;letter-spacing:-0.104px;">9.159</span>
<span class="t" style="left:1194.40px;top:388.15px;font-size:10.8px;line-height:10.8px;color:#424242;letter-spacing:-0.250px;transform:scaleX(0.9481);transform-origin:0.00px 0;-webkit-text-stroke:0.2px #424242;">$10</span>
<span class="t" style="left:1268.80px;top:388.15px;font-size:10.8px;line-height:10.8px;color:#424242;letter-spacing:0.195px;-webkit-text-stroke:0.2px #424242;">$2</span>
<span class="t" style="left:1342.10px;top:388.15px;font-size:10.8px;line-height:10.8px;color:#424242;letter-spacing:0.995px;-webkit-text-stroke:0.2px #424242;">$9</span>
<span class="t" style="left:1406.50px;top:388.15px;font-size:10.8px;line-height:10.8px;color:#424242;letter-spacing:1.495px;-webkit-text-stroke:0.2px #424242;">$5</span>
<div style="left:236px;top:452.54999999999995px;width:1204px;height:1px;background:#ededed;"></div>
<div style="left:247.5px;top:421.99999999999994px;width:15.2px;height:15.2px;background:#fff;border:1.5px solid #a3a3a3;border-radius:1px;"></div>
<span class="t" style="left:282.00px;top:426.20px;font-size:10.8px;line-height:10.8px;color:#424242;letter-spacing:-0.250px;transform:scaleX(0.9427);transform-origin:0.00px 0;-webkit-text-stroke:0.2px #424242;">0121425511015</span>
<svg style="left:373.3px;top:423.00px" width="15" height="15" viewBox="0 0 15 15"><rect width="15" height="15" rx="2.2" fill="#1b5cf7"/><rect x="3" y="6.3" width="9" height="2.4" fill="#fff"/><rect x="6.3" y="3" width="2.4" height="9" fill="#fff"/></svg>
<span class="t" style="left:393.80px;top:425.70px;font-size:10.8px;line-height:10.8px;color:#424242;letter-spacing:0.280px;-webkit-text-stroke:0.2px #424242;">Lays Cream &amp; Onions...</span>
<span class="t" style="left:557.50px;top:426.20px;font-size:10.8px;line-height:10.8px;color:#424242;letter-spacing:0.232px;-webkit-text-stroke:0.2px #424242;">Food &amp; Snacks</span>
<span class="t" style="left:681.50px;top:426.20px;font-size:10.8px;line-height:10.8px;color:#424242;letter-spacing:1.495px;-webkit-text-stroke:0.2px #424242;">$5</span>
<span class="t" style="left:771.00px;top:426.20px;font-size:10.8px;line-height:10.8px;color:#424242;letter-spacing:1.495px;-webkit-text-stroke:0.2px #424242;">$5</span>
<div style="left:853.5px;top:418.29999999999995px;width:115.2px;height:28px;background:#fff;border:1px solid #d9d9d9;border-radius:3px;"></div>
<span class="t" style="left:861.70px;top:429.00px;font-size:8.8px;line-height:8.8px;color:#333;letter-spacing:0.155px;-webkit-text-stroke:0.25px #333;">ZONE_LOGIC_1</span>
<svg style="left:950.5px;top:427.60px" width="12" height="9" viewBox="0 0 12 9"><path d="M1.8 2.6 L6 6.6 L10.2 2.6" fill="none" stroke="#2b3a55" stroke-width="1.5"/></svg>
<div style="left:988px;top:419.0px;width:182.4px;height:29.5px;background:#fff;border:1px solid #d6d6d6;border-radius:4px;"></div>
<div style="left:1025.3px;top:419.00px;width:29.6px;height:29.5px;background:#bcd6ee;border-radius:14.75px 0 0 14.75px;"></div>
<div style="left:1094.9px;top:419.00px;width:30px;height:29.5px;background:#bcd6ee;border-radius:0 14.75px 14.75px 0;"></div>
<div style="left:1034.8px;top:433px;width:11.7px;height:1.5px;background:#333;"></div>
<div style="left:1103px;top:433px;width:10.8px;height:1.5px;background:#222;"></div>
<div style="left:1107.6px;top:428.4px;width:1.5px;height:10.8px;background:#222;"></div>
<span class="t" style="left:997.65px;top:427.90px;font-size:14px;line-height:14px;color:#333;font-weight:bold;letter-spacing:1.314px;">$5</span>
<span class="t" style="left:1062.90px;top:428.40px;font-size:10.8px;line-height:10.8px;color:#444;letter-spacing:0.264px;-webkit-text-stroke:0.2px #444;">$5.3</span>
<span class="t" style="left:1130.30px;top:426.60px;font-size:5.8px;line-height:5.8px;color:#a6a6a6;letter-spacing:0.447px;-webkit-text-stroke:0.1px #a6a6a6;">Last Saved</span>
<span class="t" style="left:1135.95px;top:434.60px;font-size:9px;line-height:9px;color:#333;font-weight:bold;letter-spacing:-0.104px;">5.159</span>
<span class="t" style="left:1194.40px;top:426.80px;font-size:10.8px;line-height:10.8px;color:#424242;letter-spacing:-0.250px;transform:scaleX(0.9481);transform-origin:0.00px 0;-webkit-text-stroke:0.2px #424242;">$10</span>
<span class="t" style="left:1268.80px;top:426.80px;font-size:10.8px;line-height:10.8px;color:#424242;letter-spacing:0.195px;-webkit-text-stroke:0.2px #424242;">$2</span>
<span class="t" style="left:1342.10px;top:426.80px;font-size:10.8px;line-height:10.8px;color:#424242;letter-spacing:0.995px;-webkit-text-stroke:0.2px #424242;">$9</span>
<span class="t" style="left:1406.50px;top:426.80px;font-size:10.8px;line-height:10.8px;color:#424242;letter-spacing:1.495px;-webkit-text-stroke:0.2px #424242;">$5</span>
<div style="left:236px;top:492.2px;width:1204px;height:1px;background:#ededed;"></div>
<div style="left:247.5px;top:462.95px;width:15.2px;height:15.2px;background:#fff;border:1.5px solid #a3a3a3;border-radius:1px;"></div>
<span class="t" style="left:282.00px;top:467.15px;font-size:10.8px;line-height:10.8px;color:#424242;letter-spacing:-0.155px;-webkit-text-stroke:0.2px #424242;">04875484654</span>
<span class="t" style="left:393.80px;top:465.55px;font-size:10.8px;line-height:10.8px;color:#424242;letter-spacing:0.033px;-webkit-text-stroke:0.2px #424242;">Levis Jacket X Seri...</span>
<span class="t" style="left:557.50px;top:467.15px;font-size:10.8px;line-height:10.8px;color:#424242;letter-spacing:0.627px;-webkit-text-stroke:0.2px #424242;">Clothing</span>
<span class="t" style="left:681.50px;top:467.15px;font-size:10.8px;line-height:10.8px;color:#424242;letter-spacing:0.995px;-webkit-text-stroke:0.2px #424242;">$23</span>
<span class="t" style="left:771.00px;top:467.15px;font-size:10.8px;line-height:10.8px;color:#424242;letter-spacing:0.995px;-webkit-text-stroke:0.2px #424242;">$23</span>
<div style="left:853.5px;top:457.5px;width:115.2px;height:28px;background:#fff;border:1px solid #d9d9d9;border-radius:3px;"></div>
<span class="t" style="left:861.70px;top:468.20px;font-size:8.8px;line-height:8.8px;color:#333;letter-spacing:0.291px;-webkit-text-stroke:0.25px #333;">ZONE_LOGIC_2</span>
<svg style="left:950.5px;top:466.80px" width="12" height="9" viewBox="0 0 12 9"><path d="M1.8 2.6 L6 6.6 L10.2 2.6" fill="none" stroke="#2b3a55" stroke-width="1.5"/></svg>
<div style="left:988px;top:457.65000000000003px;width:182.4px;height:29.5px;background:#fff;border:1px solid #d6d6d6;border-radius:4px;"></div>
<div style="left:1025.3px;top:457.65px;width:29.6px;height:29.5px;background:#bcd6ee;border-radius:14.75px 0 0 14.75px;"></div>
<div style="left:1094.9px;top:457.65px;width:30px;height:29.5px;background:#bcd6ee;border-radius:0 14.75px 14.75px 0;"></div>
<div style="left:1034.8px;top:472px;width:11.7px;height:1.5px;background:#333;"></div>
<div style="left:1103px;top:472px;width:10.8px;height:1.5px;background:#222;"></div>
<div style="left:1107.6px;top:467.4px;width:1.5px;height:10.8px;background:#222;"></div>
<span class="t" style="left:993.85px;top:466.55px;font-size:14px;line-height:14px;color:#333;font-weight:bold;letter-spacing:0.564px;">$23</span>
<span class="t" style="left:1059.95px;top:467.05px;font-size:10.8px;line-height:10.8px;color:#444;letter-spacing:0.172px;-webkit-text-stroke:0.2px #444;">$23.3</span>
<span class="t" style="left:1130.30px;top:465.25px;font-size:5.8px;line-height:5.8px;color:#a6a6a6;letter-spacing:0.447px;-webkit-text-stroke:0.1px #a6a6a6;">Last Saved</span>
<span class="t" style="left:1133.15px;top:473.25px;font-size:9px;line-height:9px;color:#333;font-weight:bold;letter-spacing:0.036px;">23.159</span>
<span class="t" style="left:1194.40px;top:466.75px;font-size:10.8px;line-height:10.8px;color:#424242;letter-spacing:-0.250px;transform:scaleX(0.9481);transform-origin:0.00px 0;-webkit-text-stroke:0.2px #424242;">$10</span>
<span class="t" style="left:1268.80px;top:466.75px;font-size:10.8px;line-height:10.8px;color:#424242;letter-spacing:0.195px;-webkit-text-stroke:0.2px #424242;">$2</span>
<span class="t" style="left:1342.10px;top:466.75px;font-size:10.8px;line-height:10.8px;color:#424242;letter-spacing:0.995px;-webkit-text-stroke:0.2px #424242;">$9</span>
<span class="t" style="left:1406.50px;top:466.75px;font-size:10.8px;line-height:10.8px;color:#424242;letter-spacing:1.495px;-webkit-text-stroke:0.2px #424242;">$5</span>
<div style="left:236px;top:531.85px;width:1204px;height:1px;background:#ededed;"></div>
<div style="left:247.5px;top:501.9px;width:15.2px;height:15.2px;background:#fff;border:1.5px solid #a3a3a3;border-radius:1px;"></div>
<span class="t" style="left:282.00px;top:506.10px;font-size:10.8px;line-height:10.8px;color:#424242;letter-spacing:-0.114px;-webkit-text-stroke:0.2px #424242;">084475811225</span>
<svg style="left:373.3px;top:503.90px" width="15" height="15" viewBox="0 0 15 15"><rect width="15" height="15" rx="2.2" fill="#1b5cf7"/><rect x="3" y="6.3" width="9" height="2.4" fill="#fff"/><rect x="6.3" y="3" width="2.4" height="9" fill="#fff"/></svg>
<span class="t" style="left:393.80px;top:506.60px;font-size:10.8px;line-height:10.8px;color:#424242;letter-spacing:0.305px;-webkit-text-stroke:0.2px #424242;">Budweisser Magn...</span>
<span class="t" style="left:557.50px;top:506.10px;font-size:10.8px;line-height:10.8px;color:#424242;letter-spacing:0.373px;-webkit-text-stroke:0.2px #424242;">Beverages</span>
<span class="t" style="left:681.50px;top:506.10px;font-size:10.8px;line-height:10.8px;color:#424242;letter-spacing:1.495px;-webkit-text-stroke:0.2px #424242;">$8</span>
<span class="t" style="left:771.00px;top:506.10px;font-size:10.8px;line-height:10.8px;color:#424242;letter-spacing:1.495px;-webkit-text-stroke:0.2px #424242;">$8</span>
<div style="left:853.5px;top:497.3px;width:115.2px;height:28px;background:#fff;border:1px solid #d9d9d9;border-radius:3px;"></div>
<span class="t" style="left:861.70px;top:508.00px;font-size:8.8px;line-height:8.8px;color:#333;letter-spacing:0.291px;-webkit-text-stroke:0.25px #333;">ZONE_LOGIC_3</span>
<svg style="left:950.5px;top:506.60px" width="12" height="9" viewBox="0 0 12 9"><path d="M1.8 2.6 L6 6.6 L10.2 2.6" fill="none" stroke="#2b3a55" stroke-width="1.5"/></svg>
<div style="left:988px;top:498.3px;width:182.4px;height:29.5px;background:#fff;border:1px solid #d6d6d6;border-radius:4px;"></div>
<div style="left:1025.3px;top:498.30px;width:29.6px;height:29.5px;background:#bcd6ee;border-radius:14.75px 0 0 14.75px;"></div>
<div style="left:1094.9px;top:498.30px;width:30px;height:29.5px;background:#bcd6ee;border-radius:0 14.75px 14.75px 0;"></div>
<div style="left:1034.8px;top:512px;width:11.7px;height:1.5px;background:#333;"></div>
<div style="left:1103px;top:512px;width:10.8px;height:1.5px;background:#222;"></div>
<div style="left:1107.6px;top:507.4px;width:1.5px;height:10.8px;background:#222;"></div>
<span class="t" style="left:997.65px;top:507.20px;font-size:14px;line-height:14px;color:#333;font-weight:bold;letter-spacing:1.314px;">$8</span>
<span class="t" style="left:1062.90px;top:507.70px;font-size:10.8px;line-height:10.8px;color:#444;letter-spacing:0.264px;-webkit-text-stroke:0.2px #444;">$8.3</span>
<span class="t" style="left:1130.30px;top:505.90px;font-size:5.8px;line-height:5.8px;color:#a6a6a6;letter-spacing:0.447px;-webkit-text-stroke:0.1px #a6a6a6;">Last Saved</span>
<span class="t" style="left:1135.95px;top:513.90px;font-size:9px;line-height:9px;color:#333;font-weight:bold;letter-spacing:-0.104px;">8.159</span>
<span class="t" style="left:1194.40px;top:506.80px;font-size:10.8px;line-height:10.8px;color:#424242;letter-spacing:-0.250px;transform:scaleX(0.9481);transform-origin:0.00px 0;-webkit-text-stroke:0.2px #424242;">$10</span>
<span class="t" style="left:1268.80px;top:506.80px;font-size:10.8px;line-height:10.8px;color:#424242;letter-spacing:0.195px;-webkit-text-stroke:0.2px #424242;">$2</span>
<span class="t" style="left:1342.10px;top:506.80px;font-size:10.8px;line-height:10.8px;color:#424242;letter-spacing:0.995px;-webkit-text-stroke:0.2px #424242;">$9</span>
<span class="t" style="left:1406.50px;top:506.80px;font-size:10.8px;line-height:10.8px;color:#424242;letter-spacing:1.495px;-webkit-text-stroke:0.2px #424242;">$5</span>
<div style="left:236px;top:571.4999999999999px;width:1204px;height:1px;background:#ededed;"></div>
<div style="left:247.5px;top:541.5499999999998px;width:15.2px;height:15.2px;background:#fff;border:1.5px solid #a3a3a3;border-radius:1px;"></div>
<span class="t" style="left:282.00px;top:545.75px;font-size:10.8px;line-height:10.8px;color:#424242;letter-spacing:0.041px;-webkit-text-stroke:0.2px #424242;">025153654875</span>
<svg style="left:373.3px;top:542.55px" width="15" height="15" viewBox="0 0 15 15"><rect width="15" height="15" rx="2.2" fill="#1b5cf7"/><rect x="3" y="6.3" width="9" height="2.4" fill="#fff"/><rect x="6.3" y="3" width="2.4" height="9" fill="#fff"/></svg>
<span class="t" style="left:393.80px;top:545.25px;font-size:10.8px;line-height:10.8px;color:#424242;letter-spacing:0.263px;-webkit-text-stroke:0.2px #424242;">Monster Energy Dri..</span>
<span class="t" style="left:557.50px;top:545.75px;font-size:10.8px;line-height:10.8px;color:#424242;letter-spacing:0.373px;-webkit-text-stroke:0.2px #424242;">Beverages</span>
<span class="t" style="left:681.50px;top:545.75px;font-size:10.8px;line-height:10.8px;color:#424242;letter-spacing:1.495px;-webkit-text-stroke:0.2px #424242;">$7</span>
<span class="t" style="left:771.00px;top:545.75px;font-size:10.8px;line-height:10.8px;color:#424242;letter-spacing:1.495px;-webkit-text-stroke:0.2px #424242;">$7</span>
<div style="left:853.5px;top:537.6499999999999px;width:115.2px;height:28px;background:#fff;border:1px solid #d9d9d9;border-radius:3px;"></div>
<span class="t" style="left:861.70px;top:548.35px;font-size:8.8px;line-height:8.8px;color:#333;letter-spacing:0.155px;-webkit-text-stroke:0.25px #333;">ZONE_LOGIC_1</span>
<svg style="left:950.5px;top:546.95px" width="12" height="9" viewBox="0 0 12 9"><path d="M1.8 2.6 L6 6.6 L10.2 2.6" fill="none" stroke="#2b3a55" stroke-width="1.5"/></svg>
<div style="left:988px;top:537.2499999999999px;width:182.4px;height:29.5px;background:#fff;border:1px solid #d6d6d6;border-radius:4px;"></div>
<div style="left:1025.3px;top:537.25px;width:29.6px;height:29.5px;background:#bcd6ee;border-radius:14.75px 0 0 14.75px;"></div>
<div style="left:1094.9px;top:537.25px;width:30px;height:29.5px;background:#bcd6ee;border-radius:0 14.75px 14.75px 0;"></div>
<div style="left:1034.8px;top:551px;width:11.7px;height:1.5px;background:#333;"></div>
<div style="left:1103px;top:551px;width:10.8px;height:1.5px;background:#222;"></div>
<div style="left:1107.6px;top:546.4px;width:1.5px;height:10.8px;background:#222;"></div>
<span class="t" style="left:997.65px;top:546.15px;font-size:14px;line-height:14px;color:#333;font-weight:bold;letter-spacing:1.314px;">$7</span>
<span class="t" style="left:1062.90px;top:546.65px;font-size:10.8px;line-height:10.8px;color:#444;letter-spacing:0.264px;-webkit-text-stroke:0.2px #444;">$7.3</span>
<span class="t" style="left:1130.30px;top:544.85px;font-size:5.8px;line-height:5.8px;color:#a6a6a6;letter-spacing:0.447px;-webkit-text-stroke:0.1px #a6a6a6;">Last Saved</span>
<span class="t" style="left:1135.95px;top:552.85px;font-size:9px;line-height:9px;color:#333;font-weight:bold;letter-spacing:-0.104px;">7.159</span>
<span class="t" style="left:1194.40px;top:546.05px;font-size:10.8px;line-height:10.8px;color:#424242;letter-spacing:-0.250px;transform:scaleX(0.9481);transform-origin:0.00px 0;-webkit-text-stroke:0.2px #424242;">$10</span>
<span class="t" style="left:1268.80px;top:546.05px;font-size:10.8px;line-height:10.8px;color:#424242;letter-spacing:0.195px;-webkit-text-stroke:0.2px #424242;">$2</span>
<span class="t" style="left:1342.10px;top:546.05px;font-size:10.8px;line-height:10.8px;color:#424242;letter-spacing:0.995px;-webkit-text-stroke:0.2px #424242;">$9</span>
<span class="t" style="left:1406.50px;top:546.05px;font-size:10.8px;line-height:10.8px;color:#424242;letter-spacing:1.495px;-webkit-text-stroke:0.2px #424242;">$5</span>
<div style="left:247.5px;top:582.9px;width:15.2px;height:15.2px;background:#fff;border:1.5px solid #a3a3a3;border-radius:1px;"></div>
<span class="t" style="left:282.00px;top:587.10px;font-size:10.8px;line-height:10.8px;color:#424242;letter-spacing:-0.096px;-webkit-text-stroke:0.2px #424242;">021251423354</span>
<svg style="left:373.3px;top:581.80px" width="15" height="15" viewBox="0 0 15 15"><rect width="15" height="15" rx="2.2" fill="#1b5cf7"/><rect x="3" y="6.3" width="9" height="2.4" fill="#fff"/><rect x="6.3" y="3" width="2.4" height="9" fill="#fff"/></svg>
<span class="t" style="left:393.80px;top:584.50px;font-size:10.8px;line-height:10.8px;color:#424242;letter-spacing:0.214px;-webkit-text-stroke:0.2px #424242;">Redbull Drink 05oz...</span>
<span class="t" style="left:557.50px;top:587.10px;font-size:10.8px;line-height:10.8px;color:#424242;letter-spacing:0.373px;-webkit-text-stroke:0.2px #424242;">Beverages</span>
<span class="t" style="left:681.50px;top:587.10px;font-size:10.8px;line-height:10.8px;color:#424242;letter-spacing:1.495px;-webkit-text-stroke:0.2px #424242;">$9</span>
<span class="t" style="left:771.00px;top:587.10px;font-size:10.8px;line-height:10.8px;color:#424242;letter-spacing:1.495px;-webkit-text-stroke:0.2px #424242;">$9</span>
<div style="left:853.5px;top:578.7px;width:115.2px;height:28px;background:#fff;border:1px solid #d9d9d9;border-radius:3px;"></div>
<span class="t" style="left:861.70px;top:589.40px;font-size:8.8px;line-height:8.8px;color:#333;letter-spacing:0.291px;-webkit-text-stroke:0.25px #333;">ZONE_LOGIC_2</span>
<svg style="left:950.5px;top:588.00px" width="12" height="9" viewBox="0 0 12 9"><path d="M1.8 2.6 L6 6.6 L10.2 2.6" fill="none" stroke="#2b3a55" stroke-width="1.5"/></svg>
<div style="left:988px;top:576.7px;width:182.4px;height:29.5px;background:#fff;border:1px solid #d6d6d6;border-radius:4px;"></div>
<div style="left:1025.3px;top:576.70px;width:29.6px;height:29.5px;background:#bcd6ee;border-radius:14.75px 0 0 14.75px;"></div>
<div style="left:1094.9px;top:576.70px;width:30px;height:29.5px;background:#bcd6ee;border-radius:0 14.75px 14.75px 0;"></div>
<div style="left:1034.8px;top:591px;width:11.7px;height:1.5px;background:#333;"></div>
<div style="left:1103px;top:591px;width:10.8px;height:1.5px;background:#222;"></div>
<div style="left:1107.6px;top:586.4px;width:1.5px;height:10.8px;background:#222;"></div>
<span class="t" style="left:997.65px;top:585.60px;font-size:14px;line-height:14px;color:#333;font-weight:bold;letter-spacing:1.314px;">$9</span>
<span class="t" style="left:1062.90px;top:586.10px;font-size:10.8px;line-height:10.8px;color:#444;letter-spacing:0.264px;-webkit-text-stroke:0.2px #444;">$9.3</span>
<span class="t" style="left:1130.30px;top:584.30px;font-size:5.8px;line-height:5.8px;color:#a6a6a6;letter-spacing:0.447px;-webkit-text-stroke:0.1px #a6a6a6;">Last Saved</span>
<span class="t" style="left:1135.95px;top:592.30px;font-size:9px;line-height:9px;color:#333;font-weight:bold;letter-spacing:-0.104px;">9.159</span>
<span class="t" style="left:1194.40px;top:585.80px;font-size:10.8px;line-height:10.8px;color:#424242;letter-spacing:-0.250px;transform:scaleX(0.9481);transform-origin:0.00px 0;-webkit-text-stroke:0.2px #424242;">$10</span>
<span class="t" style="left:1268.80px;top:585.80px;font-size:10.8px;line-height:10.8px;color:#424242;letter-spacing:0.195px;-webkit-text-stroke:0.2px #424242;">$2</span>
<span class="t" style="left:1342.10px;top:585.80px;font-size:10.8px;line-height:10.8px;color:#424242;letter-spacing:0.995px;-webkit-text-stroke:0.2px #424242;">$9</span>
<span class="t" style="left:1406.50px;top:585.80px;font-size:10.8px;line-height:10.8px;color:#424242;letter-spacing:1.495px;-webkit-text-stroke:0.2px #424242;">$5</span>
<div style="left:544.7px;top:95px;width:1px;height:505px;background:rgba(90,110,130,0.45);"></div>
<div style="left:545.7px;top:95px;width:3px;height:505px;background:linear-gradient(to right, rgba(0,0,0,0.16), rgba(0,0,0,0));"></div>
<div style="left:976.5px;top:95px;width:1.8px;height:505px;background:#3f9ff0;"></div>
<div style="left:1256.3px;top:95px;width:1.8px;height:505px;background:#3f9ff0;"></div>

</body></html>
